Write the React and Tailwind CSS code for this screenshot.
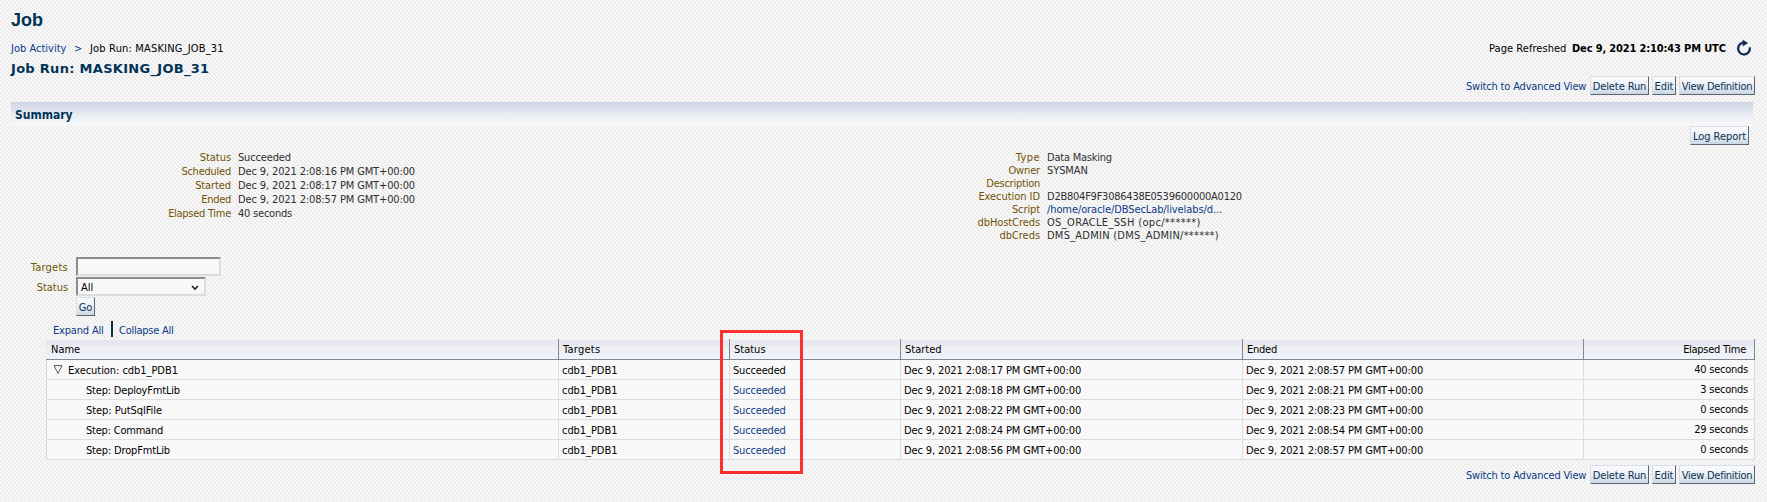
import { Fragment } from "react";

const link = "text-[#0b3a88]";

function Button({ children, className }) {
  return (
    <button
      className={`h-[19px] shrink-0 whitespace-nowrap border border-t-[#dcdce8] border-l-[#dcdce8] border-r-[#5c6474] border-b-[#5c6474] bg-linear-to-b from-[#fafbfc] via-[#edf1f6] to-[#cbd6e4] pt-[2px] text-center leading-[13px] text-[#0a3154] ${className}`}
    >
      {children}
    </button>
  );
}

function Actions() {
  return (
    <div className="flex h-[19px] justify-end pr-3">
      <a className={`w-[124px] whitespace-nowrap pt-1 tracking-[-0.18px] ${link}`}>Switch to Advanced View</a>
      <Button className="mr-[3px] w-[59px] tracking-[-0.1px]">Delete Run</Button>
      <Button className="mr-[3px] w-[24px] tracking-[-0.1px]">Edit</Button>
      <Button className="w-[76px] tracking-[-0.28px]">View Definition</Button>
    </div>
  );
}

const leftFacts = [
  ["Status", "tracking-[-0.05px]", "Succeeded", "text-[#2f2f2f] tracking-[-0.16px]"],
  ["Scheduled", "tracking-[-0.24px]", "Dec 9, 2021 2:08:16 PM GMT+00:00", "text-[#2f2f2f] tracking-[-0.13px]"],
  ["Started", "tracking-[-0.1px]", "Dec 9, 2021 2:08:17 PM GMT+00:00", "text-[#2f2f2f] tracking-[-0.13px]"],
  ["Ended", "tracking-[-0.3px]", "Dec 9, 2021 2:08:57 PM GMT+00:00", "text-[#2f2f2f] tracking-[-0.13px]"],
  ["Elapsed Time", "tracking-[-0.28px]", "40 seconds", "text-[#2f2f2f] tracking-[-0.22px]"],
];

const rightFacts = [
  ["Type", "tracking-[0.4px]", "Data Masking", "text-[#2f2f2f] tracking-[-0.22px]"],
  ["Owner", "tracking-[-0.16px]", "SYSMAN", "text-[#2f2f2f] tracking-[-0.08px]"],
  ["Description", "tracking-[-0.24px]", "", ""],
  ["Execution ID", "tracking-[-0.05px]", "D2B804F9F3086438E0539600000A0120", "text-[#2f2f2f] tracking-[-0.24px]"],
  ["Script", "tracking-[-0.1px]", "/home/oracle/DBSecLab/livelabs/d...", "text-[#0b3a88] tracking-[-0.1px]"],
  ["dbHostCreds", "tracking-[-0.08px]", "OS_ORACLE_SSH (opc/******)", "text-[#2f2f2f] tracking-[0.33px]"],
  ["dbCreds", "tracking-[-0.05px]", "DMS_ADMIN (DMS_ADMIN/******)", "text-[#2f2f2f] tracking-[0.24px]"],
];

function Facts({ rows, rowHeight }) {
  return (
    <dl className={`grid h-fit grid-cols-[231px_1fr] gap-x-[7px] whitespace-nowrap ${rowHeight}`}>
      {rows.map(([label, lt, value, vt]) => (
        <Fragment key={label}>
          <dt className={`text-right text-[#735404] ${lt}`}>{label}</dt>
          <dd className={vt}>{value}</dd>
        </Fragment>
      ))}
    </dl>
  );
}

const steps = [
  ["Execution: cdb1_PDB1", "17", "57", "40 seconds", "tracking-[-0.05px]"],
  ["Step: DeployFmtLib", "18", "21", "3 seconds", "tracking-[-0.2px]"],
  ["Step: PutSqlFile", "22", "23", "0 seconds", "tracking-[-0.05px]"],
  ["Step: Command", "24", "54", "29 seconds", "tracking-[-0.22px]"],
  ["Step: DropFmtLib", "56", "57", "0 seconds", "tracking-[-0.16px]"],
];

const cols = "grid grid-cols-[513px_171px_171px_342px_341px_171px]";
const head = "border-r border-[#84868f] pl-1 pt-1";
const cell = "border-r border-[#dddddd] pl-[3px] pt-1";

export default function App() {
  return (
    <div className="flex h-[502px] w-[1767px] flex-col overflow-hidden bg-[#f8f8f8] bg-[repeating-linear-gradient(45deg,#e5e5e5_0%,#e5e5e5_6%,#f7f7f7_6%,#f7f7f7_44%,#e5e5e5_44%,#e5e5e5_50%)] bg-[length:4px_4px] pt-[10px] font-['DejaVu_Sans_Condensed','DejaVu_Sans',sans-serif] text-[11px] leading-[13px] text-black">
      <h1 className="ml-[11px] h-8 font-['Liberation_Sans',Arial,sans-serif] text-[18px] leading-5 font-bold text-[#003457]">Job</h1>

      <div className="flex h-[34px] justify-between pl-[11px]">
        <div>
          <nav className="flex h-[18px] whitespace-nowrap">
            <a className={`w-[63px] ${link}`}>Job Activity</a>
            <span className={`w-4 ${link}`}>&gt;</span>
            <span className="tracking-[0.17px]">Job Run: MASKING_JOB_31</span>
          </nav>
          <h2 className="pt-px font-['DejaVu_Sans',sans-serif] text-[13px] leading-4 font-bold tracking-[0.3px] whitespace-nowrap text-[#003457]">Job Run: MASKING_JOB_31</h2>
        </div>
        <div className="flex whitespace-nowrap">
          <span className="w-[83px] tracking-[0.05px]">Page Refreshed</span>
          <b className="w-[163px] tracking-[-0.15px]">Dec 9, 2021 2:10:43 PM UTC</b>
          <svg className="-mt-[3px] mr-[14px]" width="18" height="18" viewBox="0 0 18 18">
            <path d="M14.8 8.4A5.9 5.9 0 1 1 8 3.7" fill="none" stroke="#0d2f55" strokeWidth="2.3" />
            <path d="M7.6 .7 13.2 4 7.6 7.6Z" fill="#0d2f55" />
          </svg>
        </div>
      </div>

      <Actions />

      <div className="mt-[7px] ml-[11px] h-6 w-[1742px] bg-linear-to-b from-[#cfd6e5] via-[#e7ebf2] to-[#f8f8f8] pt-[6px] pl-1">
        <h3 className="text-[12px] leading-[14px] font-bold text-[#003457]">Summary</h3>
      </div>

      <div className="flex h-[131px]">
        <div className="w-[809px] pt-[25px]">
          <Facts rows={leftFacts} rowHeight="auto-rows-[14px]" />
        </div>
        <div className="w-[700px] pt-[25px]">
          <Facts rows={rightFacts} rowHeight="auto-rows-[13px]" />
        </div>
        <div className="flex flex-1 justify-end pr-[18px]">
          <Button className="w-[59px] tracking-[-0.03px]">Log Report</Button>
        </div>
      </div>

      <form className="grid auto-rows-[20px] grid-cols-[68px_1fr] gap-x-2">
        <label className="pt-1 text-right tracking-[0.25px] text-[#735404]">Targets</label>
        <input className="h-[19px] w-[145px] border-2 border-t-[#8c8c8c] border-r-[#dddddd] border-b-[#dddddd] border-l-[#8c8c8c] bg-[#f8f8f8]" />
        <label className="pt-1 text-right tracking-[-0.05px] text-[#735404]">Status</label>
        <div className="flex h-[19px] w-[130px] justify-between border-2 border-t-[#8c8c8c] border-r-[#dddddd] border-b-[#dddddd] border-l-[#8c8c8c] bg-[#f8f8f8] pt-[2px] pr-[5px] pl-[3px]">
          <span>All</span>
          <svg className="mt-1" width="8" height="6" viewBox="0 0 8 6">
            <path d="M1 1 4 4 7 1" fill="none" stroke="#222" strokeWidth="1.7" />
          </svg>
        </div>
        <Button className="col-start-2 w-[19px]">Go</Button>
      </form>

      <div className="flex h-[22px] pt-1 pl-[53px] whitespace-nowrap">
        <a className={`w-[58px] pt-[3px] tracking-[-0.18px] ${link}`}>Expand All</a>
        <span className="h-4 w-[2px] bg-[#0d2c52]" />
        <a className={`pt-[3px] pl-[6px] tracking-[-0.24px] ${link}`}>Collapse All</a>
      </div>

      <div className="relative ml-[46px] h-[121px] w-[1709px] border-l border-[#d6d6dc] bg-[#f8f8f8] whitespace-nowrap">
        <div className={`${cols} -ml-px h-[21px] border-b border-[#84868f] bg-[linear-gradient(#f2f3f7_0px,#f2f3f7_1px,#e4e7f0_1px,#e5e8ef_6px,#efefef_8px,#efeff1_11px,#eef0fa_13px,#eef0fa_18px,#f8f8f8_20px)]`}>
          <div className={`${head} indent-px`}>Name</div>
          <div className={`${head} tracking-[0.25px]`}>Targets</div>
          <div className={head}>Status</div>
          <div className={head}>Started</div>
          <div className={`${head} tracking-[-0.25px]`}>Ended</div>
          <div className={`${head} pr-2 text-right tracking-[-0.28px]`}>Elapsed Time</div>
        </div>
        {steps.map(([name, start, end, elapsed, track], i) => (
          <div key={name} className={`${cols} -ml-px h-5 border-b border-[#dddddd]`}>
            <div className={`${cell} flex ${track}`}>
              {i === 0 ? (
                <>
                  <svg className="mr-[5px] ml-1" width="10" height="11" viewBox="0 0 10 11">
                    <path d="M1 1.5H9L5 9.5Z" fill="#f3f6fa" stroke="#5a5f68" />
                  </svg>
                  <span>{name}</span>
                </>
              ) : (
                <span className="pl-[37px]">{name}</span>
              )}
            </div>
            <div className={`${cell} tracking-[-0.06px]`}>cdb1_PDB1</div>
            <div className={`${cell} tracking-[-0.18px] ${i ? link : ""}`}>Succeeded</div>
            <div className={`${cell} tracking-[-0.13px]`}>Dec 9, 2021 2:08:{start} PM GMT+00:00</div>
            <div className={`${cell} tracking-[-0.13px]`}>Dec 9, 2021 2:08:{end} PM GMT+00:00</div>
            <div className="border-r border-[#dddddd] pt-[3px] pr-[6px] text-right tracking-[-0.24px]">{elapsed}</div>
          </div>
        ))}
        <div className="absolute -top-[9px] left-[673px] h-[144px] w-[83px] border-3 border-[#fb3030]" />
      </div>

      <div className="mt-[5px]">
        <Actions />
      </div>
    </div>
  );
}
